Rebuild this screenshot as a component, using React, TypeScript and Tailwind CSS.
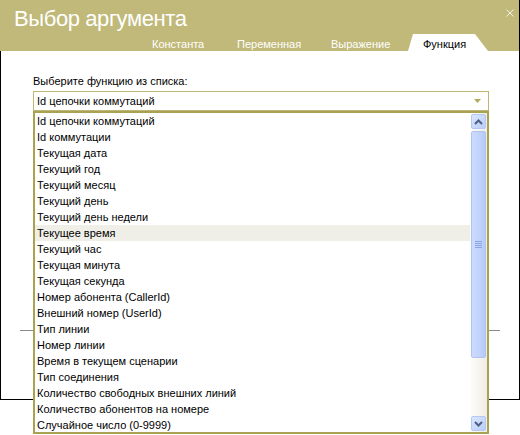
import React from "react";

const items = [
  "Id цепочки коммутаций",
  "Id коммутации",
  "Текущая дата",
  "Текущий год",
  "Текущий месяц",
  "Текущий день",
  "Текущий день недели",
  "Текущее время",
  "Текущий час",
  "Текущая минута",
  "Текущая секунда",
  "Номер абонента (CallerId)",
  "Внешний номер (UserId)",
  "Тип линии",
  "Номер линии",
  "Время в текущем сценарии",
  "Тип соединения",
  "Количество свободных внешних линий",
  "Количество абонентов на номере",
  "Случайное число (0-9999)",
];

function Chevron({ up }: { up: boolean }) {
  return (
    <svg width="9" height="6" viewBox="0 0 9 6">
      <path
        d={up ? "M1 5 L4.5 1.5 L8 5" : "M1 1 L4.5 4.5 L8 1"}
        fill="none"
        stroke="#4D6185"
        strokeWidth="2"
      />
    </svg>
  );
}

function ScrollButton({ up }: { up: boolean }) {
  return (
    <div className="h-[17px] p-px">
      <div className="flex h-full items-center justify-center rounded-[2px] border border-[#B4C8F6] bg-gradient-to-br from-[#DCE6FE] to-[#B9CDF9]">
        <Chevron up={up} />
      </div>
    </div>
  );
}

export default function App() {
  return (
    <div className="relative h-[435px] w-[520px] overflow-hidden bg-white font-['Liberation_Sans',Arial,sans-serif]">
      <div className="relative h-[400px] w-[520px] border-b border-l border-r border-black bg-white">
        {/* Header */}
        <div className="-ml-px flex h-[51px] flex-col bg-[#C0B979]">
          <div className="flex h-[34px] items-start justify-between">
            <div className="pl-[14px] pt-[5px] text-[22px] leading-[28px] tracking-[-0.4px] text-white">
              Выбор аргумента
            </div>
            <svg className="mr-[5px] mt-[9px]" width="8" height="8" viewBox="0 0 8 8">
              <path d="M0.5 0.5 L7.5 7.5 M7.5 0.5 L0.5 7.5" stroke="#F4F1DE" strokeWidth="1" />
            </svg>
          </div>
          <div className="flex h-[17px] text-[11px] leading-[16px] text-white">
            <div className="ml-[152px] w-[85px] pt-[2px]">Константа</div>
            <div className="w-[94px] pt-[2px]">Переменная</div>
            <div className="w-[77px] pt-[2px]">Выражение</div>
            <div className="w-[80px] bg-white pt-[2px] pl-[15px] text-black [clip-path:polygon(5px_0,67px_0,100%_100%,0_100%)]">
              Функция
            </div>
          </div>
        </div>

        {/* Content */}
        <div className="pt-[23px]">
          <div className="pl-[32px] text-[11px] leading-[14px] text-black">
            Выберите функцию из списка:
          </div>
          <div className="relative z-10 ml-[32px] mt-[3px] w-[456px]">
            <div className="flex h-[20px] items-center justify-between border border-[#BDB676] bg-white pl-[3px] pr-[7px] text-[11px] text-black">
              <span>Id цепочки коммутаций</span>
              <svg width="7" height="4" viewBox="0 0 7 4">
                <path d="M0 0 H7 L3.5 4 Z" fill="#B3AB5C" />
              </svg>
            </div>
            <div className="absolute left-0 top-full flex h-[323px] w-[456px] overflow-hidden border-2 border-[#A9A252] bg-white">
              <div className="flex-1 overflow-hidden">
                {items.map((t, i) => (
                  <div
                    key={t}
                    className={
                      "h-[16px] whitespace-nowrap pl-[2px] text-[11px] leading-[16px] text-black " +
                      (i === 7 ? "bg-[#EFEEE7]" : "")
                    }
                  >
                    {t}
                  </div>
                ))}
              </div>
              <div className="flex w-[17px] flex-col bg-gradient-to-r from-[#FDFDFA] to-[#EFEDE5]">
                <ScrollButton up />
                <div className="mx-px mt-px flex h-[227px] items-center justify-center rounded-[2px] border border-[#B0C4F4] bg-gradient-to-r from-[#CCDAFD] via-[#C3D4FC] to-[#B6CAF7]">
                  <div className="flex flex-col gap-px">
                    <div className="h-px w-[7px] bg-[#8CA4E4]" />
                    <div className="h-px w-[7px] bg-[#8CA4E4]" />
                    <div className="h-px w-[7px] bg-[#8CA4E4]" />
                    <div className="h-px w-[7px] bg-[#8CA4E4]" />
                  </div>
                </div>
                <div className="flex-1" />
                <ScrollButton up={false} />
              </div>
            </div>
          </div>
          <div className="ml-[19px] mt-[219px] w-[480px] border-t border-[#8A8A8A]" />
        </div>
      </div>
    </div>
  );
}
